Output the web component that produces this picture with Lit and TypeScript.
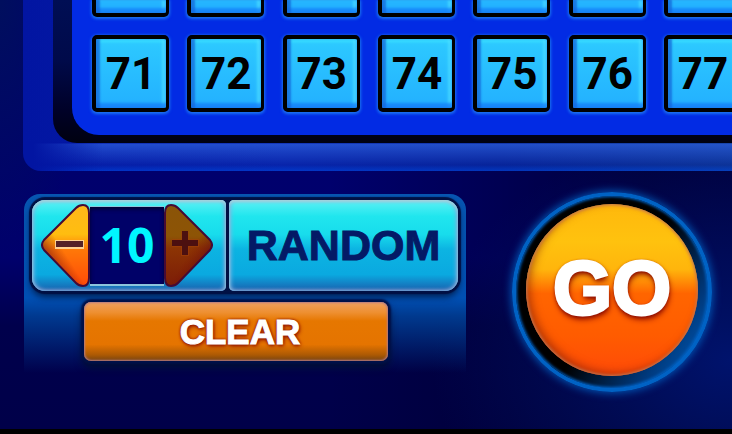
import { LitElement, html, css, svg } from "lit";
import { customElement } from "lit/decorators.js";

@customElement("number-board")
class NumberBoard extends LitElement {
  static styles = css`
    :host {
      display: block;
      overflow: hidden;
      padding-left: 23px;
    }
    .frame {
      margin-right: -40px;
      padding: 0 0 28px 30px;
      border-radius: 0 0 0 18px;
      background:
        linear-gradient(to right, #0215a2 10px, rgba(2, 21, 162, 0) 80px) 0 100% / 100% 29px no-repeat,
        linear-gradient(to bottom, transparent calc(100% - 28px), rgba(44, 94, 220, 0.75) calc(100% - 27px), rgba(12, 44, 180, 0.3) calc(100% - 6px), rgba(0, 70, 220, 0.6) 100%),
        linear-gradient(to right, #0215a2 0, #0620a6 260px, #05208e 480px, #0e3a8c 100%);
    }
    .trench {
      padding: 0 0 8px 19px;
      border-radius: 0 0 0 24px;
      background: linear-gradient(to bottom, #000e54 0, #000a4a 60px, #000128 110px, #000110 100%);
    }
    .board {
      padding: 0 31px 23px 20px;
      border-radius: 0 0 0 27px;
      background: #022be4;
    }
    .grid {
      display: grid;
      grid-template-columns: repeat(7, 77px);
      justify-content: space-between;
      row-gap: 18px;
    }
    .cell {
      box-sizing: border-box;
      height: 77px;
      margin: 0;
      padding: 0;
      border: 4px solid #000;
      border-right-width: 3px;
      border-radius: 5px;
      color: #000;
      font: bold 44px/68px Roboto, "Liberation Sans", sans-serif;
      background: linear-gradient(#2dcaff, #23b0ff);
      box-shadow:
        0 1px 3px 1px #1b74f0,
        inset 4px 0 2px rgba(20, 100, 215, 0.7),
        inset 0 -5px 3px rgba(20, 125, 250, 0.8),
        inset -4px 0 3px rgba(80, 225, 255, 0.7),
        inset 0 4px 3px rgba(60, 225, 255, 0.6);
    }
    .cut {
      height: 17px;
      border-top: 0;
      border-radius: 0 0 5px 5px;
      background: #24b4ff;
      box-shadow:
        0 1px 3px 1px #1b74f0,
        inset 4px 0 2px rgba(20, 100, 215, 0.7),
        inset 0 -5px 3px rgba(20, 125, 250, 0.8),
        inset -4px 0 3px rgba(80, 225, 255, 0.7);
    }
  `;

  render() {
    const columns = [1, 2, 3, 4, 5, 6, 7];
    return html`
      <div class="frame">
        <div class="trench">
          <div class="board">
            <div class="grid">
              ${columns.map((n) => html`<button class="cell cut" aria-label=${60 + n}></button>`)}
              ${columns.map((n) => html`<button class="cell">${70 + n}</button>`)}
            </div>
          </div>
        </div>
      </div>
    `;
  }
}

@customElement("step-arrow")
class StepArrow extends LitElement {
  static properties = {
    kind: { type: String },
    disabled: { type: Boolean },
  };
  declare kind: string;
  declare disabled: boolean;

  static styles = css`
    :host {
      display: block;
      width: 50px;
      height: 86px;
    }
    .arrow {
      display: block;
      margin: 0;
      padding: 0;
      border: 0;
      background: none;
    }
    .icon {
      display: block;
    }
  `;

  render() {
    const plus = this.kind === "plus";
    const shape = plus
      ? "M2 10 Q2 2 8 2 Q12 2 15 5 L47 37 Q51 42 47 47 L15 80 Q12 83 8 83 Q2 83 2 75 Z"
      : "M48 10 Q48 2 42 2 Q38 2 35 5 L3 37 Q-1 42 3 47 L35 80 Q38 83 42 83 Q48 83 48 75 Z";
    return html`
      <button class="arrow" aria-label=${plus ? "More" : "Fewer"} ?disabled=${this.disabled}>
        <svg class="icon" width="50" height="86" viewBox="0 0 50 86">
          <defs>
            <linearGradient id="fill" x1="0" y1="0" x2="0" y2="1">
              ${plus
                ? svg`<stop offset="0" stop-color="#8a5408"/><stop offset=".38" stop-color="#8d5405"/><stop offset=".54" stop-color="#8c3404"/><stop offset="1" stop-color="#7c1c08"/>`
                : svg`<stop offset="0" stop-color="#ffb81a"/><stop offset=".36" stop-color="#ffbd10"/><stop offset=".56" stop-color="#ff7708"/><stop offset="1" stop-color="#ff4a08"/>`}
            </linearGradient>
            <linearGradient id="shade" x1=${plus ? "1" : "0"} y1="1" x2=".5" y2=".45">
              <stop offset=".3" stop-color="#500020" stop-opacity=".8" />
              <stop offset=".85" stop-color="#801000" stop-opacity="0" />
            </linearGradient>
          </defs>
          <path d=${shape} fill="url(#fill)" />
          <path d=${shape} fill="url(#shade)" stroke="#450a35" stroke-width="2" />
          ${plus
            ? svg`<path d="M9 40 H36 M22 28 V53" stroke="#a64008" stroke-width="8" opacity=".5"/>
                  <path d="M9 40 H35 M22 28 V52" stroke="#4c1010" stroke-width="6"/>`
            : svg`<path d="M14 37 H43 V46 H14 Z" fill="#ffd8a0" opacity=".9"/>
                  <path d="M15 38 H42 V44 H15 Z" fill="#562127"/>`}
        </svg>
      </button>
    `;
  }
}

@customElement("app-root")
class AppRoot extends LitElement {
  static properties = { count: { state: true } };
  declare count: number;

  constructor() {
    super();
    this.count = 10;
  }

  static styles = css`
    :host {
      display: flex;
      flex-direction: column;
      box-sizing: border-box;
      min-height: 100vh;
      overflow: hidden;
      border-bottom: 5px solid #000;
      font-family: "Liberation Sans", Arial, sans-serif;
      background:
        radial-gradient(ellipse 300px 230px at 100% 84%, rgba(0, 20, 112, 0.95), rgba(0, 14, 90, 0) 100%),
        radial-gradient(ellipse 90px 260px at 0 0, rgba(0, 16, 92, 0.9), rgba(0, 16, 92, 0)),
        linear-gradient(to right, transparent 45%, rgba(0, 0, 34, 0.65) 88%),
        linear-gradient(to bottom, #00006e 0, #00006c 60%, #00004c 76%, #000049 100%);
    }
    .controls {
      display: flex;
      gap: 46px;
      padding: 21px 20px 0 24px;
    }
    .panel {
      flex: 1;
      box-sizing: border-box;
      height: 179px;
      margin-top: 2px;
      padding: 5px 7px;
      border-radius: 16px 16px 0 0;
      background: linear-gradient(#0755b0 0, #0050b4 58%, rgba(0, 72, 160, 0.8) 68%, rgba(0, 50, 120, 0) 100%);
    }
    .bar {
      display: flex;
      gap: 3px;
      padding: 1px;
      border-radius: 14px;
      background: #001044;
      box-shadow: 0 0 1px 2px #001044, 0 5px 7px #002050;
    }
    .glass {
      box-sizing: border-box;
      height: 91px;
      margin: 0;
      border: 0;
      background: linear-gradient(#5ff0f4 0, #20e6ee 18%, #18dcec 38%, #0cb4e2 54%, #0aa9e0 82%, #1a60ae 100%);
      box-shadow: inset 0 2px 3px #a6d4dc, inset 2px 0 4px #7cb4e4, inset -2px 0 4px #7cacdc, inset 0 -2px 2px #3a5fa8;
    }
    .stepper {
      display: flex;
      align-items: center;
      width: 194px;
      padding-left: 9px;
      border-radius: 13px 5px 5px 13px;
    }
    .value {
      width: 74px;
      height: 80px;
      box-sizing: border-box;
      margin: 0 -1px;
      border: solid #8cc4dc;
      border-width: 1px 0 2px;
      color: #00f6ff;
      font: bold 48px/76px "Open Sans", "Noto Sans", sans-serif;
      text-align: center;
      background: #000168;
      box-shadow: inset 0 2px 4px #00002c;
    }
    .random {
      flex: 1;
      padding: 0;
      border-radius: 5px 13px 13px 5px;
      color: #041a66;
      font: bold 43px/89px "Liberation Sans", Arial, sans-serif;
      -webkit-text-stroke: 1px #041a66;
    }
    .clear {
      display: block;
      width: calc(100% - 124px);
      height: 59px;
      margin: 10px 0 0 53px;
      padding: 0 0 0 8px;
      border: 0;
      border-radius: 7px;
      color: #fff;
      font: bold 35px/59px "Liberation Sans", Arial, sans-serif;
      -webkit-text-stroke: 1px #fff;
      text-shadow: 0 0 3px #8c1000, 0 0 3px #8c1000, 1px 2px 4px #8c1000;
      background: linear-gradient(#f0a060 0, #ee8f30 18%, #e67700 32%, #e57400 72%, #ab5904 90%, #744210 100%);
      box-shadow: inset 0 0 2px 1px #b57a83, 0 0 2px 3px #001048, 0 5px 8px 1px #00102c;
    }
    .go {
      box-sizing: border-box;
      flex: none;
      width: 200px;
      height: 200px;
      margin: 0;
      padding: 8px 10px 16px 10px;
      border: 4px solid #0062c4;
      border-radius: 50%;
      background: linear-gradient(125deg, #000 52%, #00387a 78%, #0062c4 96%);
      box-shadow: 0 0 8px 1px #0058b8, inset 0 0 3px 1px #0062c4;
    }
    .face {
      display: block;
      box-sizing: border-box;
      width: 172px;
      height: 172px;
      border-radius: 50%;
      color: #fff;
      font: bold 76px/168px "Liberation Sans", Arial, sans-serif;
      -webkit-text-stroke: 3px #fff;
      text-shadow: 0 0 3px #8c0c00, 0 2px 4px #8c0c00, 1px 4px 6px #8c0c00;
      background: linear-gradient(#ffb80c 0, #ffc20e 22%, #ffb50c 38%, #ff6500 52%, #ff5c00 76%, #ff4a08 100%);
      box-shadow: inset 0 0 3px 1px #c77a52, inset 4px -3px 8px rgba(130, 30, 10, 0.6);
    }
  `;

  render() {
    return html`
      <number-board></number-board>
      <div class="controls">
        <div class="panel">
          <div class="bar">
            <div class="glass stepper">
              <step-arrow kind="minus"></step-arrow>
              <output class="value">${this.count}</output>
              <step-arrow kind="plus" disabled></step-arrow>
            </div>
            <button class="glass random">RANDOM</button>
          </div>
          <button class="clear">CLEAR</button>
        </div>
        <button class="go"><span class="face">GO</span></button>
      </div>
    `;
  }
}
